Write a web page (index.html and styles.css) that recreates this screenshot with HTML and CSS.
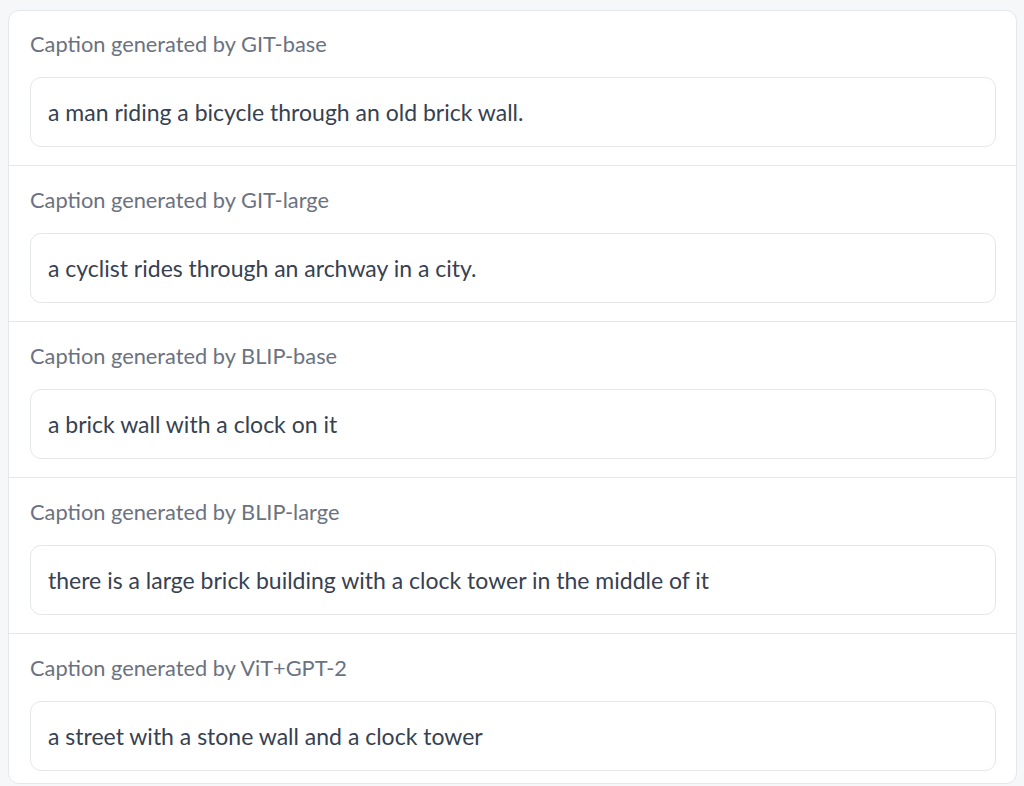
FILE: index.html
```html
<!DOCTYPE html>
<html lang="en">
<head>
<meta charset="utf-8">
<title>Captions</title>
<link rel="stylesheet" href="styles.css">
</head>
<body>
<div class="panel">
  <div class="row">
    <div class="label">Caption generated by GIT-base</div>
    <div class="box">a man riding a bicycle through an old brick wall.</div>
  </div>
  <div class="row">
    <div class="label">Caption generated by GIT-large</div>
    <div class="box">a cyclist rides through an archway in a city.</div>
  </div>
  <div class="row">
    <div class="label">Caption generated by BLIP-base</div>
    <div class="box">a brick wall with a clock on it</div>
  </div>
  <div class="row">
    <div class="label">Caption generated by BLIP-large</div>
    <div class="box">there is a large brick building with a clock tower in the middle of it</div>
  </div>
  <div class="row">
    <div class="label">Caption generated by ViT+GPT-2</div>
    <div class="box">a street with a stone wall and a clock tower</div>
  </div>
</div>
</body>
</html>
```
FILE: styles.css
```css
html, body {
  margin: 0;
  padding: 0;
  background: #f6f7f9;
  height: 100%;
  overflow: hidden;
}
body {
  padding: 10px 7px 0 8px;
  font-family: Lato, "Liberation Sans", sans-serif;
}
.panel {
  background: #ffffff;
  border: 1px solid #e5e7eb;
  border-radius: 11px;
  display: flex;
  flex-direction: column;
}
.row {
  padding: 19px 20px 18px 21px;
  border-bottom: 1px solid #e5e7eb;
  display: flex;
  flex-direction: column;
  gap: 18px;
}
.row:first-child {
  padding-top: 18px;
}
.row:last-child {
  border-bottom: none;
  padding-bottom: 12px;
}
.label {
  height: 30px;
  line-height: 30px;
  font-size: 21.8px;
  color: #6b7280;
}
.box {
  height: 70px;
  box-sizing: border-box;
  border: 1px solid #e5e7eb;
  border-radius: 11px;
  padding: 0 17px;
  display: flex;
  align-items: center;
  font-size: 23px;
  color: #374151;
}
```
